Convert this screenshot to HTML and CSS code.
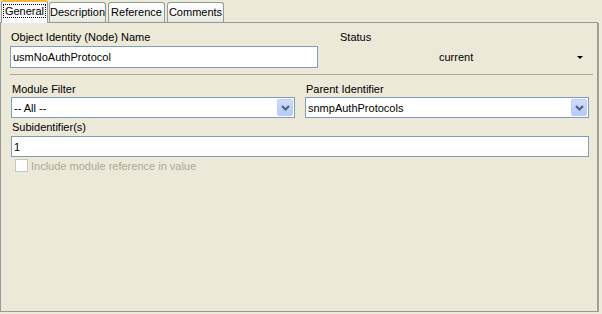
FILE: index.html
```html
<!DOCTYPE html>
<html lang="en">
<head>
  <meta charset="UTF-8">
  <title>Object Identity</title>
  <link rel="stylesheet" href="styles.css">
</head>
<body>
  <!-- tab strip -->
  <div class="tabs">
    <div class="tab active"><span class="focus">General</span></div>
    <div class="tab">Description</div>
    <div class="tab">Reference</div>
    <div class="tab">Comments</div>
  </div>

  <div class="panel">
    <!-- name + status -->
    <div class="row-top">
      <div class="field">
        <label>Object Identity (Node) Name</label>
        <input class="text name" type="text" value="usmNoAuthProtocol">
      </div>
      <div class="field">
        <label class="status-label">Status</label>
        <div class="status">
          <span>current</span>
          <span class="tri"></span>
        </div>
      </div>
    </div>

    <div class="sep"></div>

    <!-- module / parent -->
    <div class="row-combo">
      <div class="field">
        <label>Module Filter</label>
        <div class="combo"><span>-- All --</span><span class="btn"><svg width="9" height="6" viewBox="0 0 9 6"><path d="M1 1 L4.5 4.5 L8 1" fill="none" stroke="#4d6185" stroke-width="2"/></svg></span></div>
      </div>
      <div class="field">
        <label>Parent Identifier</label>
        <div class="combo"><span>snmpAuthProtocols</span><span class="btn"><svg width="9" height="6" viewBox="0 0 9 6"><path d="M1 1 L4.5 4.5 L8 1" fill="none" stroke="#4d6185" stroke-width="2"/></svg></span></div>
      </div>
    </div>

    <label class="sub-label">Subidentifier(s)</label>
    <input class="text sub" type="text" value="1">

    <div class="check">
      <span class="box"></span>
      <span>Include module reference in value</span>
    </div>
  </div>
</body>
</html>
```

FILE: styles.css
```css
body {
  margin: 0;
  background: #ece9d8;
  font-family: "Liberation Sans", Arial, sans-serif;
  font-size: 11px;
  color: #000;
  width: 600px;
  height: 312px;
}

/* tabs */
.tabs {
  display: flex;
  align-items: flex-end;
  height: 22px;
  padding-left: 1px;
}

.tab {
  box-sizing: border-box;
  height: 20px;
  width: 57px;
  padding-top: 3px;
  margin-right: 2px;
  border: 1px solid #919b9c;
  border-bottom: none;
  border-radius: 3px 3px 0 0;
  background: linear-gradient(#ffffff, #f3f3ef 60%, #e6e5dd);
  line-height: 13px;
  text-align: center;
  white-space: nowrap;
}

.tab.active {
  width: 47px;
  height: 23px;
  margin-bottom: -1px;
  margin-right: 1px;
  padding-top: 3px;
  background: #fcfcfe;
  border-top: 2px solid #f9b538;
  position: relative;
  z-index: 1;
}

.focus {
  border: 1px dotted #000;
  padding: 0 1px;
}

/* panel */
.panel {
  box-sizing: border-box;
  height: 290px;
  border: 1px solid #919b9c;
  box-shadow: 1px 1px 0 #a7a69c;
  padding: 8px 10px 0 10px;
  margin-right: 2px;
}

label {
  display: block;
  height: 13px;
  line-height: 13px;
  padding-left: 1px;
}

.field {
  display: flex;
  flex-direction: column;
}

.row-top {
  display: grid;
  grid-template-columns: 308px 1fr;
  column-gap: 22px;
  margin-left: -1px;
}

.row-top label {
  margin-bottom: 2px;
}

.text {
  box-sizing: border-box;
  border: 1px solid #7f9db9;
  background: #fff;
  font: inherit;
  padding: 0 2px;
  margin: 0;
  outline: none;
}

.name {
  width: 308px;
  height: 22px;
}

.status-label {
  padding-left: 0;
}

.status {
  height: 22px;
  display: flex;
  align-items: center;
  justify-content: space-between;
  padding-left: 99px;
  padding-right: 4px;
}

.tri {
  width: 0;
  height: 0;
  border-left: 3px solid transparent;
  border-right: 3px solid transparent;
  border-top: 3px solid #000;
  margin-top: 1px;
}

.sep {
  height: 1px;
  background: #aca899;
  margin: 6px -6px 8px -1px;
}

.row-combo {
  display: grid;
  grid-template-columns: 284px 284px;
  column-gap: 10px;
}

.row-combo label {
  margin-bottom: 1px;
}

.combo {
  box-sizing: border-box;
  height: 21px;
  border: 1px solid #7f9db9;
  background: #fff;
  display: flex;
  align-items: center;
  justify-content: space-between;
  padding: 0 1px 0 2px;
}

.btn {
  box-sizing: border-box;
  width: 16px;
  height: 17px;
  border: 1px solid #bccefa;
  border-radius: 2px;
  background: linear-gradient(#cfdcfd, #b6c9f7);
  display: flex;
  align-items: center;
  justify-content: center;
}

.sub-label {
  margin-top: 3px;
  margin-bottom: 2px;
}

.sub {
  display: block;
  width: 578px;
  height: 21px;
}

.check {
  display: flex;
  align-items: center;
  gap: 3px;
  margin-top: 2px;
  margin-left: 4px;
  color: #aca899;
}

.box {
  box-sizing: border-box;
  width: 13px;
  height: 13px;
  border: 1px solid #cac8bb;
  background: #fff;
}
```
